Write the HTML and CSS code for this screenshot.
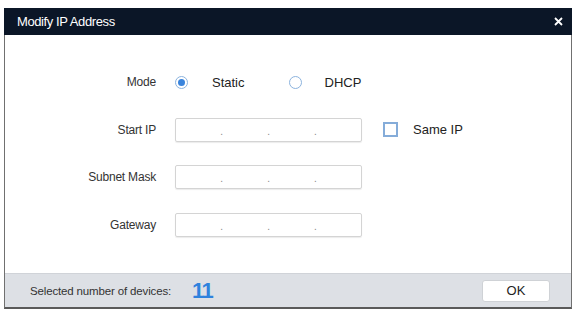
FILE: index.html
```html
<!DOCTYPE html>
<html lang="en">

<head>
    <meta name="viewport" content="width=device-width, initial-scale=1">
    <link rel="stylesheet" href="styles.css">
</head>

<body>

    <!-- Modify IP dialog -->
    <div class="dialog">
        <div class="title-bar">
            <span class="title">Modify IP Address</span>
            <svg class="close" width="9" height="9" viewBox="0 0 9 9">
                <path d="M1 1 L8 8 M8 1 L1 8" stroke="#ffffff" stroke-width="1.8" />
            </svg>
        </div>

        <div class="dialog-body">
            <div class="form-grid">
                <label class="field-label">Mode</label>
                <div class="control-row">
                    <span class="radio checked"></span>
                    <span class="radio-text">Static</span>
                    <span class="radio"></span>
                    <span class="radio-text">DHCP</span>
                </div>

                <label class="field-label">Start IP</label>
                <div class="control-row">
                    <div class="ip-input">
                        <span class="seg"></span><span class="dot">.</span>
                        <span class="seg"></span><span class="dot">.</span>
                        <span class="seg"></span><span class="dot">.</span>
                        <span class="seg"></span>
                    </div>
                    <span class="checkbox"></span>
                    <span class="check-text">Same IP</span>
                </div>

                <label class="field-label">Subnet Mask</label>
                <div class="control-row">
                    <div class="ip-input">
                        <span class="seg"></span><span class="dot">.</span>
                        <span class="seg"></span><span class="dot">.</span>
                        <span class="seg"></span><span class="dot">.</span>
                        <span class="seg"></span>
                    </div>
                </div>

                <label class="field-label">Gateway</label>
                <div class="control-row">
                    <div class="ip-input">
                        <span class="seg"></span><span class="dot">.</span>
                        <span class="seg"></span><span class="dot">.</span>
                        <span class="seg"></span><span class="dot">.</span>
                        <span class="seg"></span>
                    </div>
                </div>
            </div>
        </div>

        <!-- Footer with device count -->
        <div class="footer">
            <span class="footer-text">Selected number of devices:</span>
            <span class="count">11</span>
            <button class="ok-button">OK</button>
        </div>
    </div>

</body>

</html>
```

FILE: styles.css
```css
* {
    box-sizing: border-box;
}

body {
    margin: 0;
    font-family: "Liberation Sans", Arial, Helvetica, sans-serif;
    background-color: #ffffff;
    color: #222;
}

.dialog {
    margin: 8px 0 0 4px;
    width: 568px;
    height: 301px;
    display: flex;
    flex-direction: column;
    border-left: 1px solid #707070;
    border-right: 1px solid #707070;
    border-bottom: 2px solid #5a5a5a;
}

/* Dark title bar */
.title-bar {
    height: 27px;
    background-color: #0b1627;
    color: #ffffff;
    display: flex;
    align-items: center;
    justify-content: space-between;
    padding: 0 9px 0 13px;
    margin: 0 -1px;
}

.title {
    font-size: 13px;
    letter-spacing: -0.4px;
}

.close {
    display: block;
}

.dialog-body {
    flex: 1;
    padding-top: 35px;
}

.form-grid {
    display: grid;
    grid-template-columns: 151px auto;
    column-gap: 19px;
    row-gap: 23.5px;
}

.field-label {
    text-align: right;
    font-size: 12px;
    letter-spacing: -0.2px;
    line-height: 24px;
    color: #333;
}

.control-row {
    display: flex;
    align-items: center;
    height: 24px;
}

/* Radio buttons */
.radio {
    width: 13px;
    height: 13px;
    border: 1px solid #8cb3de;
    border-radius: 50%;
    display: flex;
    align-items: center;
    justify-content: center;
    background: #ffffff;
}

.radio.checked::after {
    content: "";
    width: 7px;
    height: 7px;
    border-radius: 50%;
    background-color: #3a84dc;
}

.radio-text {
    font-size: 13px;
    margin-left: 24px;
    margin-right: 44px;
}

.radio-text:last-child {
    margin-left: 23px;
}

/* IP address input */
.ip-input {
    width: 187px;
    height: 24px;
    border: 1px solid #d4d4d4;
    border-radius: 2px;
    box-shadow: 0 1px 1px rgba(0, 0, 0, 0.08);
    display: flex;
    align-items: center;
    padding-top: 3px;
}

.seg {
    flex: 1;
}

.dot {
    font-size: 10px;
    color: #888;
}

.checkbox {
    width: 15px;
    height: 15px;
    border: 2px solid #85acd9;
    margin-left: 21px;
}

.check-text {
    font-size: 13px;
    margin-left: 15px;
}

/* Footer */
.footer {
    height: 34px;
    background-color: #dde0e5;
    border-top: 1px solid #d0d3d8;
    display: flex;
    align-items: center;
    padding: 0 21px 0 25px;
}

.footer-text {
    font-size: 11.5px;
    letter-spacing: -0.15px;
    color: #333;
}

.count {
    font-size: 22px;
    font-weight: bold;
    letter-spacing: -1.5px;
    color: #2f82dd;
    margin-left: 21px;
}

.ok-button {
    margin-left: auto;
    width: 68px;
    height: 22px;
    background-color: #ffffff;
    border: 1px solid #cfd2d6;
    border-radius: 3px;
    font-family: "Liberation Sans", Arial, sans-serif;
    font-size: 13px;
    color: #222;
    padding: 0;
}
```
